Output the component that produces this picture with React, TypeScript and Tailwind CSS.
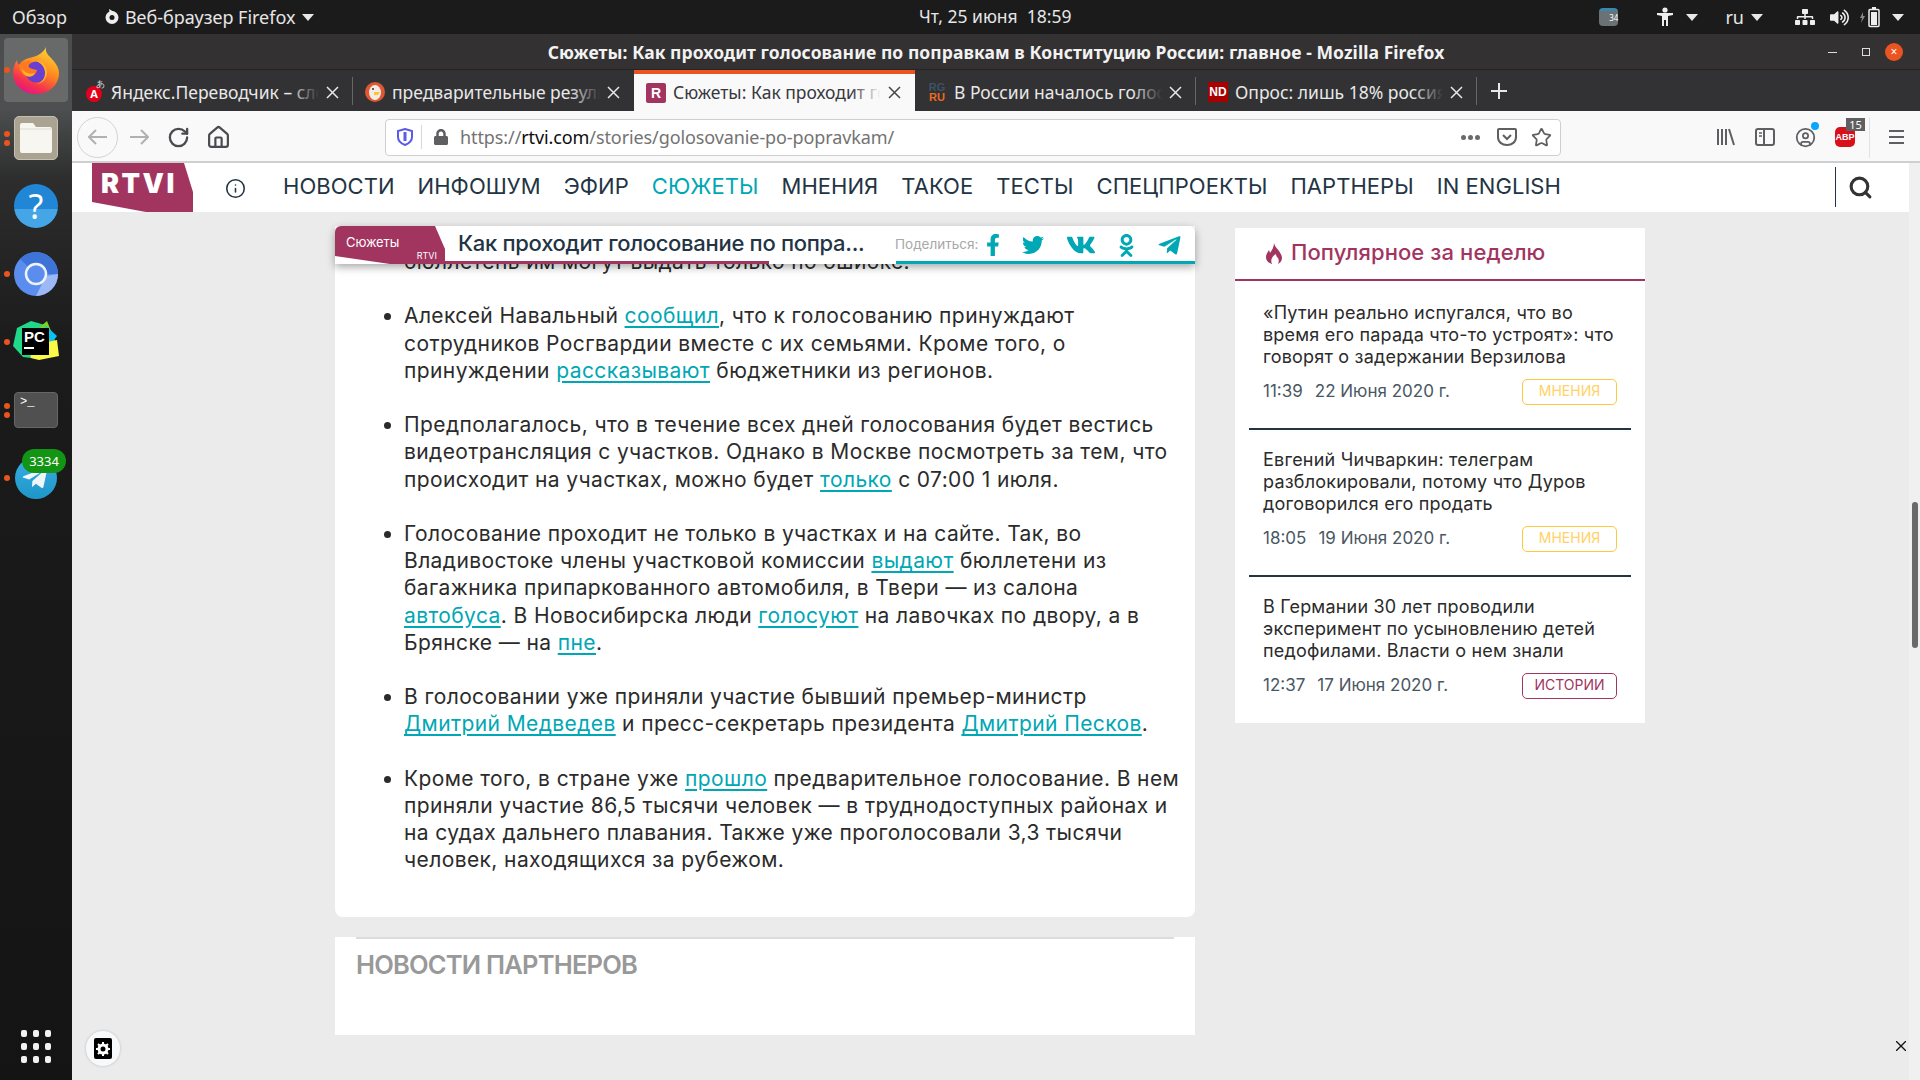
import { CircleUser, House, Info, RotateCw, Search, Star } from "lucide-react";
import { FaFacebookF, FaLock, FaOdnoklassniki, FaSitemap, FaTelegramPlane, FaTwitter, FaVk, FaVolumeUp } from "react-icons/fa";
import type { ReactNode } from "react";

const SITE = "font-['Inter',sans-serif]";
const DESK = "font-['Noto_Sans',sans-serif]";

function Caret() {
  return (
    <svg width="12" height="7" viewBox="0 0 12 7" className="shrink-0">
      <path d="M0 0h12L6 7z" fill="#e8e8e8" />
    </svg>
  );
}

function TopBar() {
  return (
    <div className={`h-[34px] shrink-0 bg-[#1b1b1b] text-[#e6e6e6] flex items-center relative text-[18px] ${DESK}`}>
      <span className="ml-[12px]">Обзор</span>
      <svg width="16" height="16" viewBox="0 0 16 16" className="ml-[37px]">
        <circle cx="8" cy="8.5" r="6.5" fill="#eee" />
        <circle cx="8" cy="8.5" r="2.5" fill="#1b1b1b" />
        <path d="M5 0l5 3-4 3z" fill="#eee" />
      </svg>
      <span className="ml-[5px]">Веб-браузер Firefox</span>
      <span className="ml-[6px]"><Caret /></span>
      <span className="absolute left-[919px] top-[3px] text-[17.5px]">Чт, 25 июня&nbsp;&nbsp;18:59</span>
      <div className="ml-auto flex items-center mr-[16px]">
        <div className="w-[19px] h-[18px] rounded-[4px] bg-[#6b7275] border-t-[3px] border-[#3b87b0] text-[8px] leading-[14px] text-right text-white">34</div>
        <svg width="16" height="20" viewBox="0 0 16 20" className="ml-[39px]" fill="#eee">
          <circle cx="8" cy="3" r="2.6" />
          <path d="M0 6h16v2l-5 1v10H9v-6H7v6H5V9L0 8z" />
        </svg>
        <span className="ml-[13px]"><Caret /></span>
        <span className="ml-[27px] text-[18px]">ru</span>
        <span className="ml-[7px]"><Caret /></span>
        <FaSitemap className="ml-[32px] text-[#eee]" size={20} />
        <FaVolumeUp className="ml-[15px] text-[#eee]" size={19} />
        <svg width="22" height="22" viewBox="0 0 22 22" className="ml-[11px]">
          <path d="M3 6L0 12h2l-1 5 4-7H3z" fill="#888" />
          <rect x="9" y="3.5" width="10" height="17" rx="1" fill="none" stroke="#eee" strokeWidth="1.5" />
          <rect x="11" y="6" width="6" height="13" fill="#eee" />
          <rect x="12" y="1" width="4" height="2" fill="#eee" />
        </svg>
        <span className="ml-[10px]"><Caret /></span>
      </div>
    </div>
  );
}

function DockItem({ dots = 0, children }: { dots?: number; children: ReactNode }) {
  return (
    <div className="relative h-[68px] flex items-center justify-center">
      {dots > 0 && (
        <div className="absolute left-[4px] top-0 bottom-0 flex flex-col justify-center gap-[3px] z-10">
          {Array.from({ length: dots }).map((_, i) => (
            <div key={i} className="w-[6px] h-[6px] rounded-full bg-[#e95420]" />
          ))}
        </div>
      )}
      {children}
    </div>
  );
}

function Dock() {
  return (
    <div className="w-[72px] shrink-0 flex flex-col pt-[2px] pb-[17px] bg-[linear-gradient(to_bottom,#4a4c4d_0%,#4d4f50_7%,#2c2d2c_14%,#1a1b1a_30%,#141414_100%)]">
      <DockItem dots={1}>
        <div className="w-[64px] h-[64px] rounded-[4px] bg-[#686a6a] flex items-center justify-center">
          <svg width="46" height="47" viewBox="0 0 46 47">
            <defs>
              <linearGradient id="fx" x1="0.8" y1="0" x2="0.3" y2="1">
                <stop offset="0" stopColor="#ffdc3a" />
                <stop offset="0.45" stopColor="#ff8a1f" />
                <stop offset="0.8" stopColor="#f4304f" />
                <stop offset="1" stopColor="#e31587" />
              </linearGradient>
            </defs>
            <path d="M33 0c-1 5 2 8 5 11 5 5 8 10 8 15 0 12-10 21-23 21S0 38 0 26c0-5 2-10 4-13 0 2 1 4 2 5 2-4 6-6 10-7 6-1 14-4 17-11z" fill="url(#fx)" />
            <circle cx="23" cy="25" r="10.500" fill="#6a3fd0" />
            <path d="M23 14c7 0 11 5 11 11 0 7-5 12-11 12 6-1 9-6 9-11 0-6-4-10-9-12z" fill="#ffb52a" />
            <path d="M6 18c4-3 9-5 14-3-3 1-5 3-4 5 1 2 6 2 8 3-1 5-6 8-11 6-4-2-7-6-7-11z" fill="#ff7a1f" />
            <path d="M9 22c3 4 8 6 13 4-1 3-5 4-8 3-3-1-5-4-5-7z" fill="#ffb52a" />
          </svg>
        </div>
      </DockItem>
      <DockItem dots={2}>
        <div className="w-[44px] h-[44px] rounded-[5px] bg-[#aaa391] border border-[#c4bfb0] flex items-center justify-center">
          <svg width="32" height="30" viewBox="0 0 32 30">
            <path d="M2 0h11l3 4h14a2 2 0 012 2v22a2 2 0 01-2 2H2a2 2 0 01-2-2V2a2 2 0 012-2z" fill="#f7f6f1" />
            <path d="M0 6h32" stroke="#dcdad2" strokeWidth="1" />
          </svg>
        </div>
      </DockItem>
      <DockItem>
        <div className={`w-[44px] h-[44px] rounded-full bg-[linear-gradient(to_bottom,#2286d6_0%,#2286d6_56%,#44a6e6_56%,#44a6e6_100%)] flex items-center justify-center text-white text-[34px] leading-none ${DESK}`}>?</div>
      </DockItem>
      <DockItem dots={1}>
        <svg width="44" height="44" viewBox="0 0 44 44">
          <circle cx="22" cy="22" r="22" fill="#5b8def" />
          <path d="M6 7A22 22 0 0144 22H22z" fill="#3e74d8" />
          <path d="M44 22a22 22 0 01-22 22l10-20z" fill="#9db9f5" />
          <circle cx="22" cy="22" r="10" fill="#5b8def" stroke="#eef3fd" strokeWidth="2.5" />
        </svg>
      </DockItem>
      <DockItem dots={1}>
        <div className="relative w-[46px] h-[44px]">
          <svg width="46" height="44" viewBox="0 0 46 44">
            <path d="M4 8l14-7 14 4-6 34-16-2L0 26z" fill="#21d789" />
            <path d="M28 6l6-5 8 20-24 6z" fill="#7ed321" />
            <path d="M32 5l12 11-6 8z" fill="#07c3f2" />
            <path d="M16 26l28-6 2 16-20 4-8-2z" fill="#fcf84a" />
          </svg>
          <div className="absolute left-[9px] top-[8px] w-[27px] h-[27px] bg-black text-white font-['Liberation_Sans',sans-serif] font-bold text-[15px] leading-[17px] pl-[2px]">
            PC
            <div className="w-[10px] h-[2px] bg-white mt-[2px]" />
          </div>
        </div>
      </DockItem>
      <DockItem dots={2}>
        <div className="w-[44px] h-[36px] rounded-[4px] bg-[#505050] border border-[#666] text-white text-[12px] font-['Liberation_Mono',monospace] leading-[14px] pl-[5px] pt-[2px]">&gt;_</div>
      </DockItem>
      <DockItem dots={1}>
        <div className="w-[42px] h-[42px] rounded-full bg-gradient-to-b from-[#37aee2] to-[#1e96c8] flex items-center justify-center">
          <FaTelegramPlane className="text-[#eef6fa] mr-[3px]" size={28} />
        </div>
        <div className={`absolute left-[22px] top-[5px] w-[44px] h-[24px] rounded-full bg-[#149414] text-white text-[13px] leading-[24px] text-center ${DESK}`}>3334</div>
      </DockItem>
      <div className="mt-auto self-center grid grid-cols-3 gap-x-[6px] gap-y-[6px]">
        {Array.from({ length: 9 }).map((_, i) => (
          <div key={i} className="w-[6px] h-[7px] rounded-[2px] bg-[#f2f2f2]" />
        ))}
      </div>
    </div>
  );
}

function WindowTitle() {
  return (
    <div className={`h-[36px] shrink-0 bg-[#333132] border-b border-[#242424] text-[#f2f2f2] font-bold text-[17.5px] tracking-[0.07px] flex items-center justify-center relative ${DESK}`}>
      <span className="mt-[1px]">Сюжеты: Как проходит голосование по поправкам в Конституцию России: главное - Mozilla Firefox</span>
      <div className="absolute left-[1756px] top-[18px] w-[9px] h-px bg-[#ddd]" />
      <div className="absolute left-[1790px] top-[14px] w-[8px] h-[8px] border border-[#ddd]" />
      <div className="absolute left-[1813px] top-[9px] w-[18px] h-[18px] rounded-full bg-[#e95420] text-white text-[12px] leading-[18px] text-center font-normal">×</div>
    </div>
  );
}

const tabs: { title: string; icon: ReactNode; active?: boolean }[] = [
  {
    title: "Яндекс.Переводчик – словари и онлайн перевод",
    icon: (
      <div className="relative w-[16px] h-[16px] mt-[3px] rounded-full bg-[#e3001b] text-white text-[11px] leading-[16px] text-center font-bold">
        A<span className="absolute left-[10px] -top-[10px] text-[9px] text-[#ddd] font-normal">あ</span>
      </div>
    ),
  },
  {
    title: "предварительные результаты голосования",
    icon: (
      <svg width="20" height="20" viewBox="0 0 20 20">
        <circle cx="10" cy="10" r="10" fill="#de5833" />
        <ellipse cx="10" cy="10.5" rx="6" ry="7.5" fill="#f4ece4" />
        <path d="M9 10h6l-2 3H9z" fill="#fdc13c" />
        <circle cx="8" cy="7" r="1" fill="#333" />
      </svg>
    ),
  },
  {
    title: "Сюжеты: Как проходит голосование",
    active: true,
    icon: <div className="w-[20px] h-[20px] rounded-[2px] bg-[#a23560] text-white text-[14px] font-black leading-[20px] text-center font-['Liberation_Sans',sans-serif]">R</div>,
  },
  {
    title: "В России началось голосование",
    icon: (
      <div className="w-[20px] text-[11px] font-bold leading-[10px] font-['Liberation_Sans',sans-serif] text-center">
        <div className="text-[#3d5363]">RG</div>
        <div className="text-[#ea6a1f]">RU</div>
      </div>
    ),
  },
  {
    title: "Опрос: лишь 18% россиян",
    icon: <div className="w-[20px] h-[20px] bg-[#a80000] text-white text-[12px] font-black leading-[20px] text-center font-['Liberation_Sans',sans-serif]">ND</div>,
  },
];

function TabBar() {
  return (
    <div className={`h-[41px] shrink-0 bg-[#323234] flex items-stretch text-[17.5px] ${DESK}`}>
      {tabs.map((tab, i) => (
        <div
          key={tab.title}
          className={`w-[281px] shrink-0 flex items-center relative pl-[8px] ${
            tab.active ? "bg-[#f9f9fa] text-[#38383d] border-t-[4px] border-[#e95420]" : "text-[#e8e8e8] pt-[3px]"
          }`}
        >
          <div className="w-[22px] ml-[3px] flex justify-center">{tab.icon}</div>
          <div className="relative w-[208px] ml-[6px] overflow-hidden whitespace-nowrap">
            {tab.title}
            <div className={`absolute right-0 top-0 bottom-0 w-[30px] bg-gradient-to-r from-transparent ${tab.active ? "to-[#f9f9fa]" : "to-[#323234]"}`} />
          </div>
          <svg width="13" height="13" viewBox="0 0 13 13" className="ml-[7px]">
            <path d="M1 1l11 11M12 1L1 12" stroke={tab.active ? "#45454a" : "#e8e8e8"} strokeWidth="1.5" />
          </svg>
          {!tab.active && i !== 1 && <div className="absolute right-0 top-[7px] bottom-[6px] w-px bg-[#66666a]" />}
        </div>
      ))}
      <div className="ml-[14px] self-center text-[#e8e8e8]">
        <svg width="16" height="16" viewBox="0 0 16 16">
          <path d="M8 0v16M0 8h16" stroke="currentColor" strokeWidth="2" />
        </svg>
      </div>
    </div>
  );
}

function Toolbar() {
  return (
    <div className={`h-[52px] shrink-0 bg-[#f9f9fa] border-b-2 border-[#cfcfcf] pt-[2px] flex items-center text-[#5a5a5c] ${DESK}`}>
      <div className="ml-[5px] w-[41px] h-[41px] rounded-full border border-[#d3d3d3] flex items-center justify-center">
        <svg width="20" height="16" viewBox="0 0 20 16">
          <path d="M1 8h18M8 1L1 8l7 7" fill="none" stroke="#b1b1b3" strokeWidth="2" />
        </svg>
      </div>
      <svg width="20" height="16" viewBox="0 0 20 16" className="ml-[11px]">
        <path d="M1 8h18M12 1l7 7-7 7" fill="none" stroke="#b1b1b3" strokeWidth="2" />
      </svg>
      <RotateCw size={23} className="ml-[18px] text-[#4a4a4f]" strokeWidth={2.4} />
      <House size={25} className="ml-[16px] text-[#4a4a4f]" strokeWidth={2.1} />
      <div className="ml-[154px] w-[1176px] h-[37px] bg-white border border-[#cfcfcf] rounded-[4px] flex items-center">
        <svg width="16" height="18" viewBox="0 0 16 18" className="ml-[11px]">
          <path d="M8 1l7 2v6c0 4-3 6.500-7 8-4-1.500-7-4-7-8V3z" fill="none" stroke="#5a5ae6" strokeWidth="2" />
          <path d="M8 4v9" stroke="#5a5ae6" strokeWidth="3" />
        </svg>
        <div className="ml-[8px] w-px h-[24px] bg-[#d8d8d8]" />
        <FaLock size={16} className="ml-[11px] text-[#5f5f62]" />
        <span className="ml-[11px] text-[18px] text-[#737373] tracking-[-0.1px]">
          https://<span className="text-[#0c0c0d]">rtvi.com</span>/stories/golosovanie-po-popravkam/
        </span>
        <div className="ml-auto flex items-center mr-[8px]">
          <div className="flex gap-[2px]">
            {[0, 1, 2].map((i) => (
              <div key={i} className="w-[5px] h-[5px] rounded-full bg-[#6a6a6c]" />
            ))}
          </div>
          <svg width="20" height="20" viewBox="0 0 20 20" className="ml-[17px]">
            <path d="M2 2h16a1 1 0 011 1v7c0 5-4 8-9 8s-9-3-9-8V3a1 1 0 011-1z" fill="none" stroke="#5f5f62" strokeWidth="2" />
            <path d="M6 8l4 4 4-4" fill="none" stroke="#5f5f62" strokeWidth="2" />
          </svg>
          <Star size={21} className="ml-[14px] text-[#5f5f62]" strokeWidth={2} />
        </div>
      </div>
      <svg width="20" height="20" viewBox="0 0 20 20" className="ml-[155px]">
        <path d="M2 2v16M6 2v16M10 2v16M13 2l5 16" stroke="#5f5f62" strokeWidth="2" fill="none" />
      </svg>
      <svg width="20" height="20" viewBox="0 0 20 20" className="ml-[19px]">
        <rect x="1" y="2" width="18" height="16" rx="2" fill="none" stroke="#5f5f62" strokeWidth="2" />
        <path d="M9 2v16" stroke="#5f5f62" strokeWidth="2" />
        <path d="M4 6h3M4 9h3" stroke="#5f5f62" strokeWidth="1.5" />
      </svg>
      <div className="relative ml-[20px]">
        <CircleUser size={21} className="text-[#5f5f62]" />
        <div className="absolute -right-[3px] -top-[5px] w-[8px] h-[8px] rounded-full bg-[#0aa5ff]" />
      </div>
      <div className="relative ml-[19px] w-[20px] h-[20px]">
        <div className="w-[20px] h-[20px] bg-[#d8101c] text-white text-[9px] font-bold leading-[20px] text-center rounded-[5px] font-['Liberation_Sans',sans-serif]">ABP</div>
        <div className="absolute left-[11px] -top-[9px] w-[19px] h-[13px] bg-[#5f5f62] text-white text-[11px] leading-[13px] text-center">15</div>
      </div>
      <div className="ml-[14px] w-px h-[41px] bg-[#e2e2e2]" />
      <div className="ml-[19px] flex flex-col gap-[4px]">
        {[0, 1, 2].map((i) => (
          <div key={i} className="w-[15px] h-[2px] bg-[#5f5f62]" />
        ))}
      </div>
    </div>
  );
}

const navItems = ["НОВОСТИ", "ИНФОШУМ", "ЭФИР", "СЮЖЕТЫ", "МНЕНИЯ", "ТАКОЕ", "ТЕСТЫ", "СПЕЦПРОЕКТЫ", "ПАРТНЕРЫ", "IN ENGLISH"];

function SiteNav() {
  return (
    <div className={`h-[49px] shrink-0 bg-white flex items-center text-[#233444] relative ${SITE}`}>
      <div className="ml-[20px] relative w-[101px] h-[49px] shrink-0">
        <svg width="101" height="49" viewBox="0 0 101 49" className="absolute inset-0">
          <path d="M0 0h92l9 29v20H54L0 39z" fill="#a23560" />
        </svg>
        <span className="absolute left-[9px] top-[7px] text-white font-black text-[27px] leading-[28px] tracking-[2.5px]">RTVI</span>
      </div>
      <Info size={21} strokeWidth={1.8} className="ml-[32px] mt-[1px]" />
      <div className="ml-[37px] -mt-[2px] flex gap-[23px] text-[22px] tracking-[0.05px]">
        {navItems.map((item) => (
          <span key={item} className={item === "СЮЖЕТЫ" ? "text-[#00a7b5]" : ""}>{item}</span>
        ))}
      </div>
      <div className="absolute left-[1763px] top-[4px] bottom-[5px] w-px bg-[#233444]" />
      <Search size={25} strokeWidth={3} className="absolute left-[1776px] top-[12px] text-[#333]" />
    </div>
  );
}

function A({ children }: { children: ReactNode }) {
  return <a className="text-[#00a7b5] underline underline-offset-[3px]">{children}</a>;
}

function Article() {
  return (
    <div className={`relative bg-white rounded-b-[8px] pt-[22px] pb-[43px] pl-[69px] text-[21px] leading-[27.2px] text-[#2b2b2b] tracking-[0.4px] whitespace-nowrap ${SITE}`}>
      <div className="absolute left-0 right-0 top-0 h-[38px] bg-white rounded-t-[6px] shadow-[0_3px_8px_rgba(0,0,0,0.35)] flex items-center z-10 tracking-normal">
        <div className="relative w-[110px] h-[38px] shrink-0">
          <svg width="110" height="38" viewBox="0 0 110 38" className="absolute inset-0">
            <path d="M6 0h94l10 23v15H55L0 30V6a6 6 0 016-6z" fill="#a23560" />
          </svg>
          <span className="absolute left-[11px] top-[8px] text-white text-[13px] leading-[16px] tracking-[-0.1px]">Сюжеты</span>
          <span className="absolute right-[8px] bottom-[3px] text-white text-[9px] leading-[10px]">RTVI</span>
        </div>
        <div className="absolute left-[110px] bottom-0 w-[324px] h-[3px] bg-[#a23560]" />
        <span className="ml-[13px] -mt-[2px] text-[22px] font-medium text-[#233444] tracking-[-0.3px]">Как проходит голосование по попра...</span>
        <div className="absolute left-[561px] right-0 bottom-0 h-[3px] bg-[#00a7b5]" />
        <span className="absolute left-[560px] top-[10px] text-[13.500px] leading-[16px] text-[#a8a8a8]">Поделиться:</span>
        <FaFacebookF size={22} className="absolute left-[647px] top-[8px] text-[#00a7b5]" />
        <FaTwitter size={22} className="absolute left-[687px] top-[8px] text-[#00a7b5]" />
        <FaVk size={30} className="absolute left-[731px] top-[4px] text-[#00a7b5]" />
        <FaOdnoklassniki size={23} className="absolute left-[780px] top-[8px] text-[#00a7b5]" />
        <FaTelegramPlane size={25} className="absolute left-[822px] top-[7px] text-[#00a7b5]" />
      </div>
      <div className="mb-[27.2px]">бюллетень им могут выдать только по ошибке.</div>
      <ul className="list-disc">
        <li className="mb-[27.2px]">
          Алексей Навальный <A>сообщил</A>, что к голосованию принуждают<br />
          сотрудников Росгвардии вместе с их семьями. Кроме того, о<br />
          принуждении <A>рассказывают</A> бюджетники из регионов.
        </li>
        <li className="mb-[27.2px]">
          Предполагалось, что в течение всех дней голосования будет вестись<br />
          видеотрансляция с участков. Однако в Москве посмотреть за тем, что<br />
          происходит на участках, можно будет <A>только</A> с 07:00 1 июля.
        </li>
        <li className="mb-[27.2px]">
          Голосование проходит не только в участках и на сайте. Так, во<br />
          Владивостоке члены участковой комиссии <A>выдают</A> бюллетени из<br />
          багажника припаркованного автомобиля, в Твери — из салона<br />
          <A>автобуса</A>. В Новосибирска люди <A>голосуют</A> на лавочках по двору, а в<br />
          Брянске — на <A>пне</A>.
        </li>
        <li className="mb-[27.2px]">
          В голосовании уже приняли участие бывший премьер-министр<br />
          <A>Дмитрий Медведев</A> и пресс-секретарь президента <A>Дмитрий Песков</A>.
        </li>
        <li>
          Кроме того, в стране уже <A>прошло</A> предварительное голосование. В нем<br />
          приняли участие 86,5 тысячи человек — в труднодоступных районах и<br />
          на судах дальнего плавания. Также уже проголосовали 3,3 тысячи<br />
          человек, находящихся за рубежом.
        </li>
      </ul>
    </div>
  );
}

const popular = [
  { lines: ["«Путин реально испугался, что во", "время его парада что-то устроят»: что", "говорят о задержании Верзилова"], time: "11:39", date: "22 Июня 2020 г.", tag: "МНЕНИЯ" },
  { lines: ["Евгений Чичваркин: телеграм", "разблокировали, потому что Дуров", "договорился его продать"], time: "18:05", date: "19 Июня 2020 г.", tag: "МНЕНИЯ" },
  { lines: ["В Германии 30 лет проводили", "эксперимент по усыновлению детей", "педофилами. Власти о нем знали"], time: "12:37", date: "17 Июня 2020 г.", tag: "ИСТОРИИ" },
];

function Popular() {
  return (
    <div className={`w-[410px] shrink-0 bg-white mt-[2px] self-start ${SITE}`}>
      <div className="h-[53px] border-b-2 border-[#a23560] flex items-center pl-[31px]">
        <svg width="16" height="21" viewBox="0 0 16 21" fill="#a23560">
          <path d="M8 0c1 4 3 5 5 8 2 3 3 5 3 7 0 3-2 5-4 6 1-2 1-4 0-6-1-1-2-2-2-4-2 1-3 2-4 4-1 2-1 4 0 6-3-1-6-3-6-7 0-3 2-5 3-7l1 3c2-3 4-6 4-10z" />
        </svg>
        <span className="ml-[9px] -mt-[2px] text-[22px] font-medium text-[#a23560] tracking-[0.1px]">Популярное за неделю</span>
      </div>
      <div className="pt-[2px] pb-[1px]">
        {popular.map((item, i) => (
          <div key={item.date} className={`mx-[14px] px-[14px] pt-[19px] pb-[23px] ${i < 2 ? "border-b-2 border-[#233444]" : ""}`}>
            <div className="text-[18px] leading-[22px] text-[#2b2b2b] whitespace-nowrap tracking-[0.2px]">
              {item.lines.map((l) => (
                <div key={l}>{l}</div>
              ))}
            </div>
            <div className="mt-[11px] flex items-center text-[17px] text-[#4a5763]">
              <span>{item.time}</span>
              <span className="ml-[12px]">{item.date}</span>
              <span
                className={`ml-auto w-[95px] h-[26px] rounded-[5px] border text-center text-[14px] leading-[22px] ${
                  item.tag === "МНЕНИЯ" ? "border-[#ffc93c] text-[#ffd266]" : "border-[#a23560] text-[#a23560]"
                }`}
              >
                {item.tag}
              </span>
            </div>
          </div>
        ))}
      </div>
    </div>
  );
}

export default function App() {
  return (
    <div className="w-[1920px] h-[1080px] overflow-hidden flex flex-col bg-[#ebebeb]">
      <TopBar />
      <div className="flex flex-1 min-h-0">
        <Dock />
        <div className="flex-1 min-w-0 flex flex-col relative">
          <WindowTitle />
          <TabBar />
          <Toolbar />
          <div className="mr-[11px]">
            <SiteNav />
          </div>
          <div className="flex-1 flex pl-[263px] pt-[14px] gap-[40px] items-start">
            <div className="w-[860px] shrink-0 flex flex-col gap-[20px]">
              <Article />
              <div className={`h-[98px] bg-white text-[25.500px] font-semibold text-[#999] tracking-[-0.8px] ${SITE}`}>
                <div className="mx-[21px] h-[2px] bg-[#dcdcdc]" />
                <div className="pl-[21px] pt-[7px]">НОВОСТИ ПАРТНЕРОВ</div>
              </div>
            </div>
            <Popular />
          </div>
          {/* floating bits on top of the page */}
          <div className="absolute right-0 top-[129px] bottom-0 w-[11px] bg-[#f0f0f0]">
            <div className="absolute left-[3px] top-[339px] w-[6px] h-[146px] rounded-[3px] bg-[#6a6a6a]" />
          </div>
          <div className="absolute left-[14px] bottom-[14px] w-[34px] h-[35px] rounded-full bg-[#f7f9fa] shadow-[0_0_3px_rgba(0,0,0,0.2)] flex items-center justify-center">
            <div className="w-[18px] h-[21px] rounded-[2px] bg-black flex items-center justify-center">
              <svg width="14" height="14" viewBox="0 0 14 14">
                <circle cx="7" cy="7" r="4" fill="none" stroke="#fff" strokeWidth="3" />
                <path d="M7 0v3M7 11v3M0 7h3M11 7h3M2 2l2 2M10 10l2 2M12 2l-2 2M4 10l-2 2" stroke="#fff" strokeWidth="2" />
              </svg>
            </div>
          </div>
          <svg width="10" height="10" viewBox="0 0 10 10" className="absolute right-[14px] bottom-[29px]">
            <path d="M0 0l10 10M10 0L0 10" stroke="#111" strokeWidth="1.3" />
          </svg>
        </div>
      </div>
    </div>
  );
}
